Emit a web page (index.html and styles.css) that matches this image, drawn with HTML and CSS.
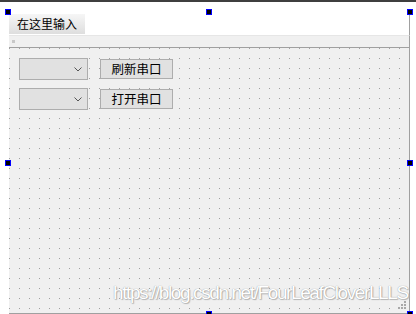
FILE: index.html
```html
<!DOCTYPE html>
<html>
<head>
<meta charset="utf-8">
<link rel="stylesheet" href="styles.css">
</head>
<body>
<div class="topbar"></div>
<div class="stage">
  <div class="form">
    <div class="menubar"><span class="menu-item">在这里输入</span></div>
    <div class="toolbar"><span class="grip"></span></div>
    <div class="canvas">
      <div class="widgets">
        <div class="combo"><svg class="chev" width="8" height="5" viewBox="0 0 8 5"><path d="M0.5 0.5 L4 4 L7.5 0.5" fill="none" stroke="#555" stroke-width="1"/></svg></div>
        <button class="btn">刷新串口</button>
        <div class="combo"><svg class="chev" width="8" height="5" viewBox="0 0 8 5"><path d="M0.5 0.5 L4 4 L7.5 0.5" fill="none" stroke="#555" stroke-width="1"/></svg></div>
        <button class="btn">打开串口</button>
      </div>
      <svg class="sizegrip" width="9" height="9" viewBox="0 0 9 9">
        <rect x="6" y="0" width="2" height="2" fill="#a8a8a8"/>
        <rect x="3" y="3" width="2" height="2" fill="#a8a8a8"/>
        <rect x="6" y="3" width="2" height="2" fill="#a8a8a8"/>
        <rect x="0" y="6" width="2" height="2" fill="#a8a8a8"/>
        <rect x="3" y="6" width="2" height="2" fill="#a8a8a8"/>
        <rect x="6" y="6" width="2" height="2" fill="#a8a8a8"/>
      </svg>
      <div class="watermark">https://blog.csdn.net/FourLeafCloverLLLS</div>
    </div>
  </div>
  <span class="handle h-tl"></span>
  <span class="handle h-tc"></span>
  <span class="handle h-tr"></span>
  <span class="handle h-ml"></span>
  <span class="handle h-mr"></span>
  <span class="handle h-bc"></span>
  <span class="handle h-br"></span>
</div>
</body>
</html>
```
FILE: styles.css
```css
* { box-sizing: border-box; }
html, body {
  margin: 0;
  padding: 0;
  background: #ffffff;
  width: 416px;
  height: 314px;
  overflow: hidden;
  font-family: "Noto Sans CJK SC", "Liberation Sans", sans-serif;
}
.topbar {
  height: 2px;
  background: #3f3f3f;
}
.stage {
  position: relative;
  height: 312px;
}
.form {
  margin-left: 9px;
  padding-top: 12px;
  width: 401px;
  height: 312px;
  display: flex;
  flex-direction: column;
}
.menubar {
  height: 21px;
  background: #ffffff;
  border-right: 1px solid #a0a0a0;
  display: flex;
}
.menu-item {
  height: 20px;
  width: 76px;
  padding-left: 8px;
  font-size: 12px;
  line-height: 20px;
  color: #000;
  background: linear-gradient(#f6f6f6, #dedede);
}
.toolbar {
  height: 13px;
  background: #f0f0f0;
  border-top: 1px solid #e6e6e6;
  border-bottom: 1px solid #a0a0a0;
  border-right: 1px solid #a0a0a0;
  display: flex;
  align-items: flex-start;
}
.grip {
  width: 3px;
  height: 3px;
  margin: 4px 0 0 3px;
  background: #c8c8c8;
}
.canvas {
  position: relative;
  flex: 1;
  background-color: #a0a0a0;
  background-image:
    linear-gradient(to right, transparent 1px, #f0f0f0 1px),
    linear-gradient(to bottom, transparent 1px, #f0f0f0 1px);
  background-size: 10px 10px;
  background-position: 0 0;
  border-right: 1px solid #a0a0a0;
  border-bottom: 1px solid #a0a0a0;
}
.widgets {
  padding: 10px 0 0 10px;
  display: grid;
  grid-template-columns: 69px 73px;
  grid-auto-rows: 22px;
  column-gap: 12px;
  row-gap: 8px;
  align-items: start;
}
.combo {
  height: 22px;
  background: #e1e1e1;
  border: 1px solid #adadad;
  display: flex;
  align-items: center;
  justify-content: flex-end;
  padding-right: 5px;
}
.chev { display: block; margin-top: 1px; }
.btn {
  margin: 1px 0 0 0;
  height: 20px;
  width: 73px;
  padding: 0;
  background: #e1e1e1;
  border: 1px solid #adadad;
  border-radius: 0;
  font-family: "Noto Sans CJK SC", sans-serif;
  font-size: 12.5px;
  line-height: 18px;
  color: #000;
  text-align: center;
}
.sizegrip {
  position: absolute;
  right: 2px;
  bottom: 3px;
}
.watermark {
  position: absolute;
  left: 104px;
  top: 234px;
  font-family: "Liberation Sans", Arial, sans-serif;
  font-size: 19px;
  letter-spacing: -1.4px;
  color: #ffffff;
  text-shadow: 0 0 1px #8a8a8a, 1px 1px 1px #b8b8b8;
  white-space: nowrap;
}
.handle {
  position: absolute;
  width: 6px;
  height: 6px;
  background: #000;
  border: 1px solid #0000ff;
}
.h-tl { left: 5px; top: 7px; }
.h-tc { left: 206px; top: 7px; }
.h-tr { left: 407px; top: 7px; }
.h-ml { left: 5px; top: 158px; }
.h-mr { left: 407px; top: 158px; }
.h-bc { left: 206px; top: 309px; }
.h-br { left: 407px; top: 309px; }
```
